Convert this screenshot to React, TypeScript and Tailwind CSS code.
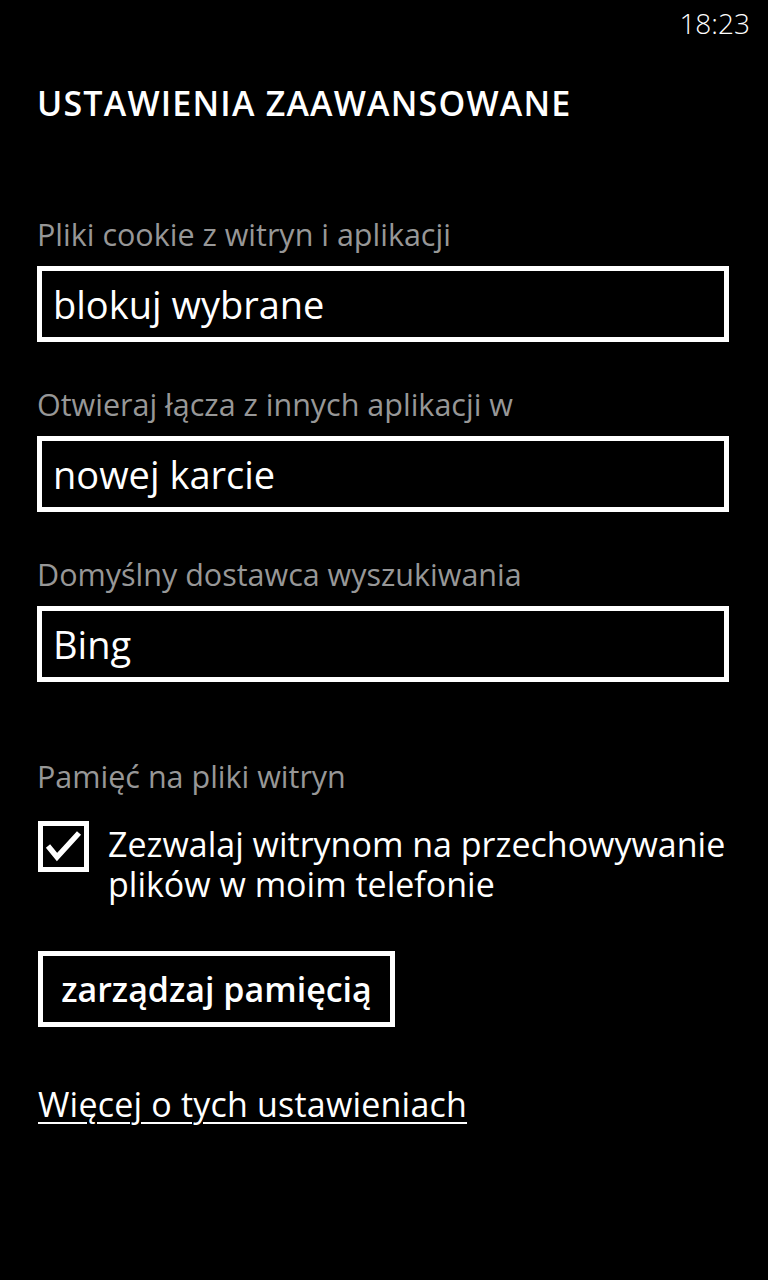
import React from "react";

const font = { fontFamily: '"Open Sans", "Noto Sans", sans-serif' };

function Field({ label, value, first }: { label: string; value: string; first?: boolean }) {
  return (
    <div className={first ? "mt-[91px]" : "mt-[42px]"}>
      <div className="text-[30.5px] leading-[40px] text-[#979797] whitespace-nowrap">{label}</div>
      <div className="mt-[12px] h-[76px] w-[692px] border-[5px] border-white flex items-center pl-[11px]">
        <span className="text-[38px] leading-[50px] text-white whitespace-nowrap">{value}</span>
      </div>
    </div>
  );
}

export default function App() {
  return (
    <div className="w-[768px] h-[1280px] bg-black text-white overflow-hidden" style={font}>
      <div className="h-[47px] flex justify-end pr-[18px]">
        <span className="text-[28px] leading-[47px] font-light">18:23</span>
      </div>
      <div className="pl-[37px] pr-[38px]">
        <div className="mt-[36px] text-[34px] leading-[40px] font-semibold tracking-[1.2px] whitespace-nowrap">
          USTAWIENIA ZAAWANSOWANE
        </div>
        <Field first label="Pliki cookie z witryn i aplikacji" value="blokuj wybrane" />
        <Field label="Otwieraj łącza z innych aplikacji w" value="nowej karcie" />
        <Field label="Domyślny dostawca wyszukiwania" value="Bing" />

        <div className="mt-[74px] text-[30.5px] leading-[40px] text-[#979797] whitespace-nowrap">
          Pamięć na pliki witryn
        </div>
        <div className="mt-[25px] flex items-start">
          <div className="w-[51px] h-[51px] border-[5px] border-white shrink-0 ml-[1px]">
            <svg width="41" height="41" viewBox="0 0 41 41">
              <path d="M5 20 L14 31 L36 7" fill="none" stroke="white" strokeWidth="5.5" strokeLinejoin="miter" />
            </svg>
          </div>
          <div className="ml-[19px] mt-[3px] text-[34px] leading-[40px] whitespace-nowrap">
            Zezwalaj witrynom na przechowywanie
            <br />
            plików w moim telefonie
          </div>
        </div>

        <div className="mt-[47px] ml-[1px] w-[357px] h-[76px] border-[5px] border-white flex items-center justify-center">
          <span className="text-[34px] leading-[46px] font-semibold whitespace-nowrap">zarządzaj pamięcią</span>
        </div>

        <div className="mt-[57px] ml-[1px] text-[34px] leading-[40px] tracking-[0.2px] whitespace-nowrap">
          <span className="underline decoration-2 underline-offset-[5px]">Więcej o tych ustawieniach</span>
        </div>
      </div>
    </div>
  );
}
